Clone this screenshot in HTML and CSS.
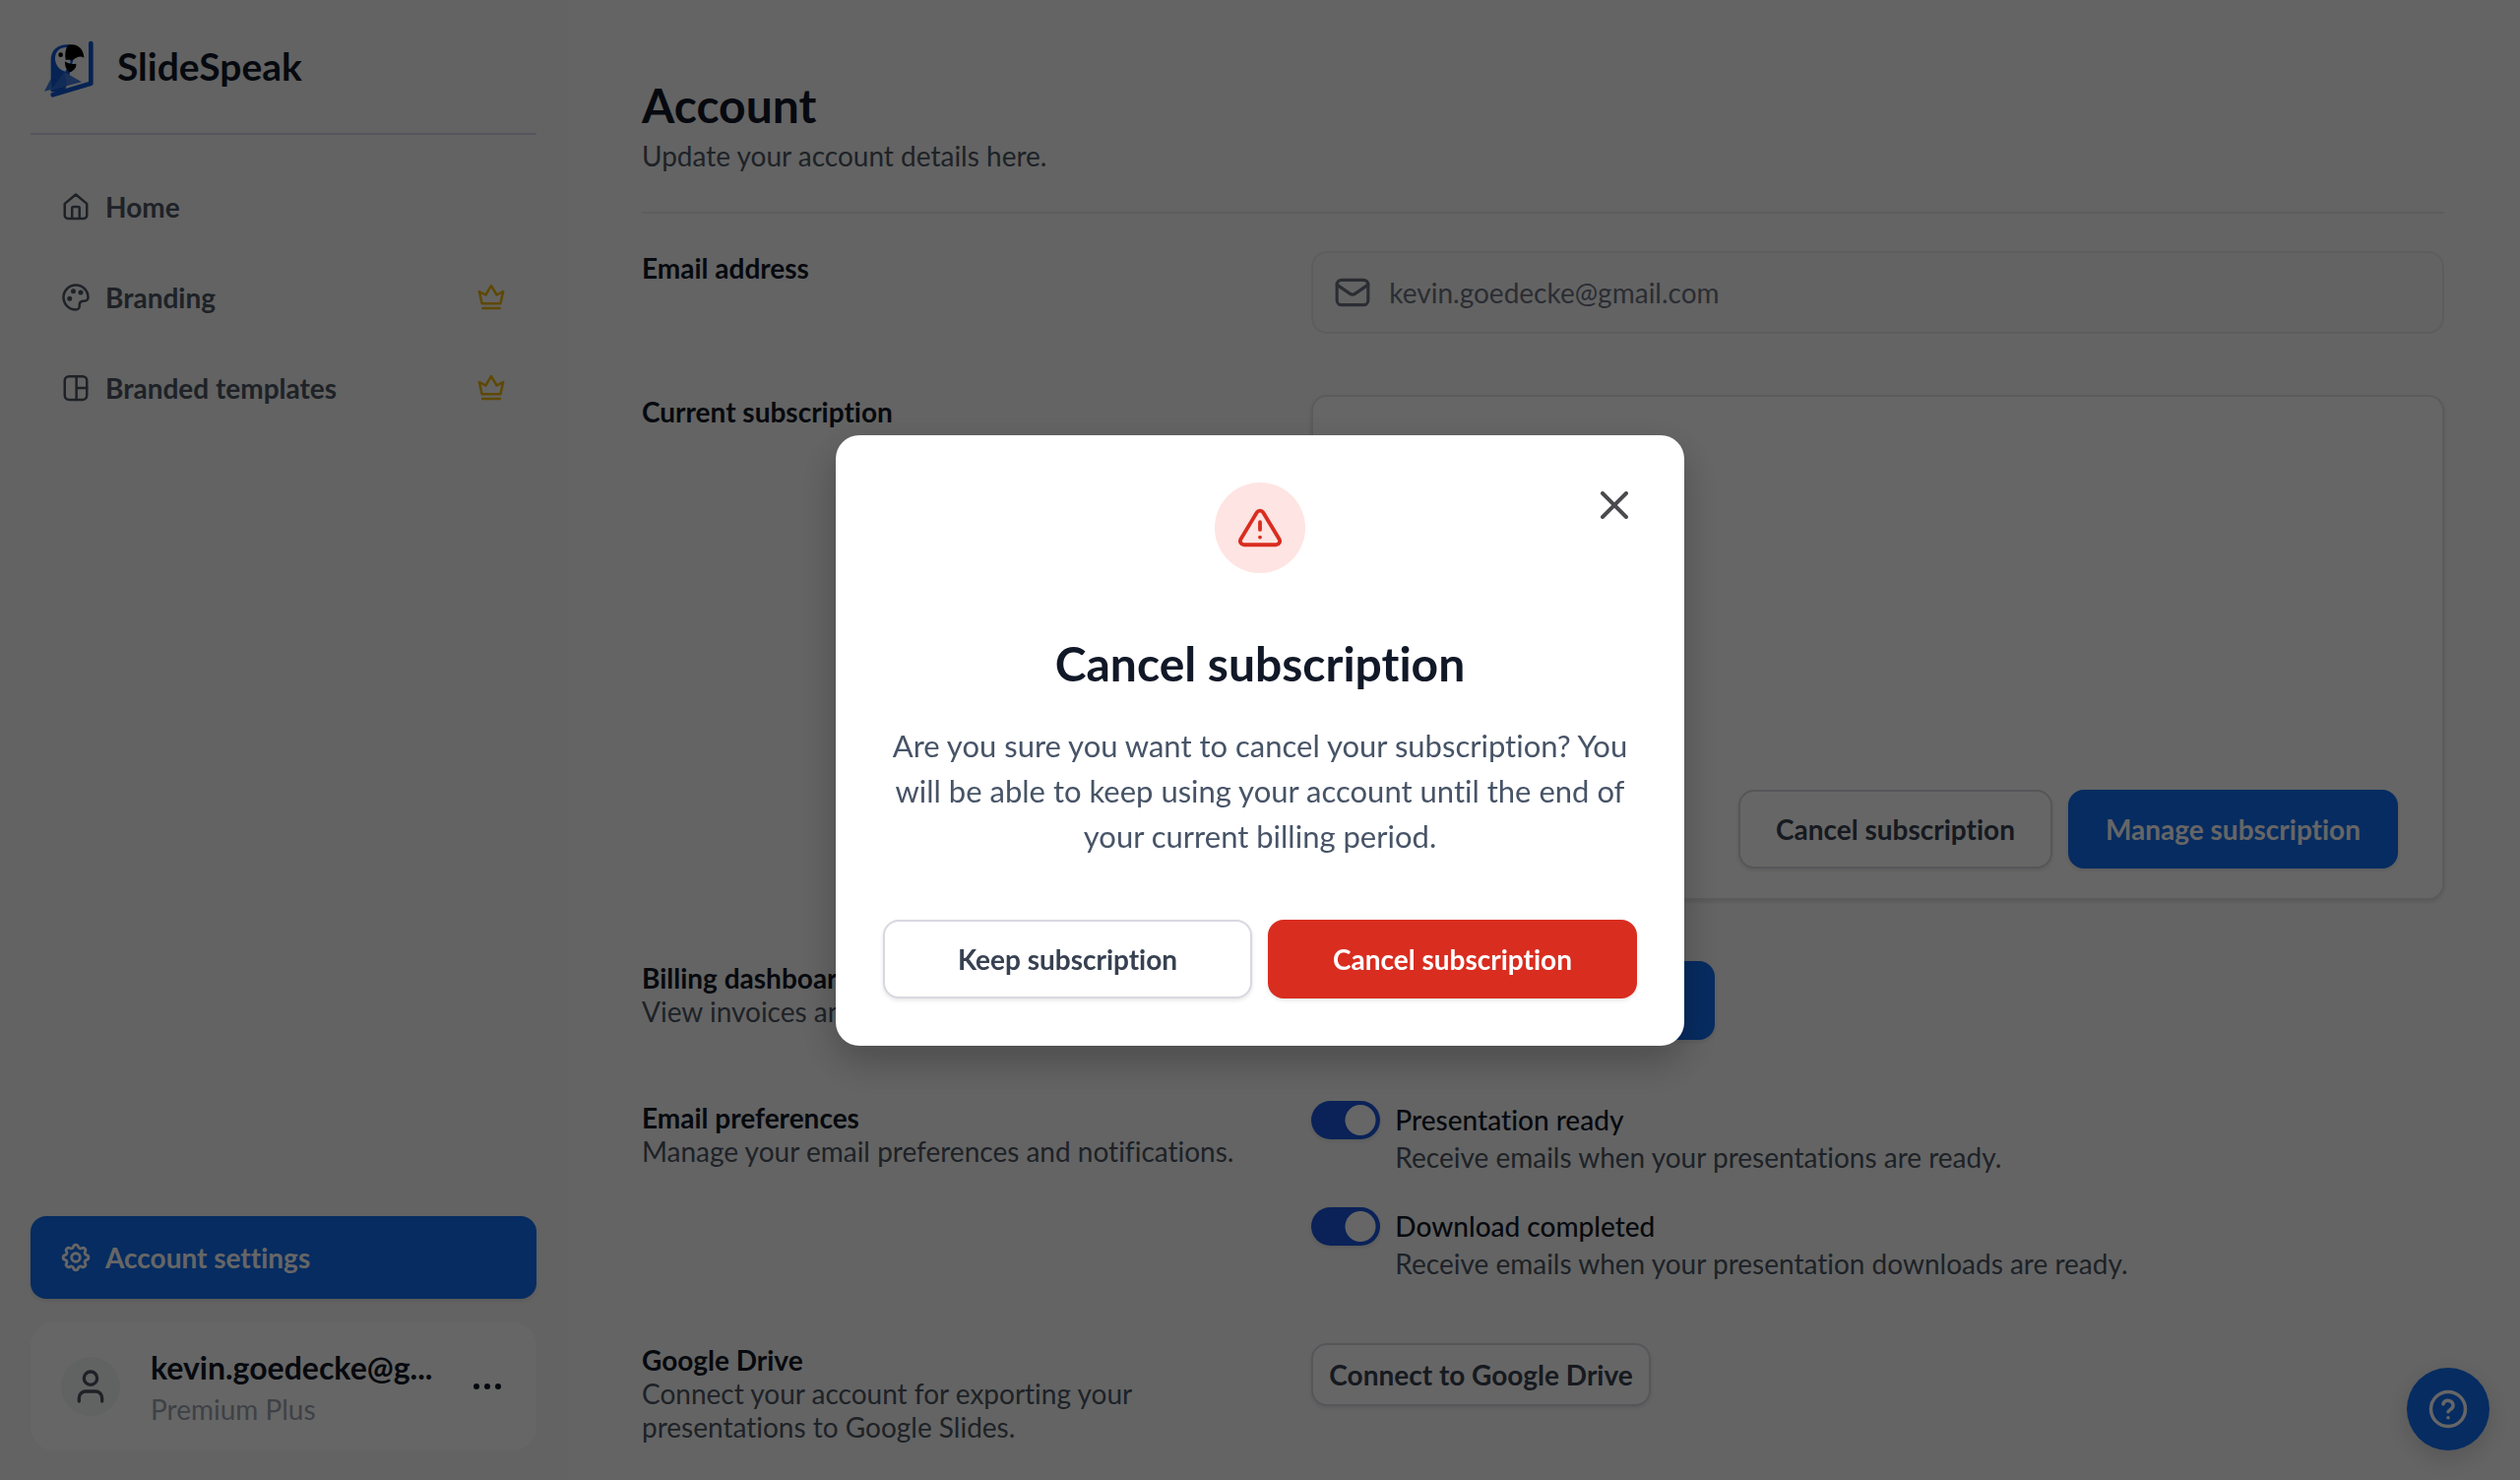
FILE: index.html
```html
<!DOCTYPE html>
<html lang="en">
<head>
<meta charset="utf-8">
<title>Account - SlideSpeak</title>
<link rel="stylesheet" href="styles.css">
</head>
<body>
<div class="app">
  <aside class="sidebar">
    <a class="brand" href="#">
      <svg class="brand-logo" viewBox="36 30 162 180" aria-hidden="true">
        <path fill="#0f57d2" d="M62 190V92C62 62 84 46 112 46L140 52 120 132 104 190Z"/>
        <path fill="#3b7de0" d="M42 188 62 150 66 182Z"/>
        <path fill="#4a7edb" d="M104 130 156 160 64 184Z"/>
        <path fill="#2f6fdc" d="M104 130 112 172 64 184Z"/>
        <path fill="#f5f5f5" d="M112 54C88 54 74 68 75 90C76 108 88 124 106 128L122 100Z"/>
        <circle cx="92" cy="77" r="7"/>
        <path d="M114 47C142 40 162 58 163 86C152 78 140 84 130 92L107 92C104 76 106 60 114 47Z"/>
        <path d="M105 97C116 106 128 106 139 104C140 116 134 124 120 130C110 124 104 112 105 97Z"/>
        <path fill="none" stroke="#0f57d2" stroke-width="14" stroke-linecap="round" stroke-linejoin="round" d="M184 42V164L68 199"/>
      </svg>
      <span class="brand-name">SlideSpeak</span>
    </a>
    <nav class="nav">
      <a class="nav-item" href="#">
        <svg class="nav-icon" viewBox="0 0 24 24"><path d="M3 9.500 12 2l9 7.500V19a2.500 2.500 0 0 1-2.500 2.500h-13A2.500 2.500 0 0 1 3 19ZM9 21.500V13a1 1 0 0 1 1-1h4a1 1 0 0 1 1 1v8.500"/></svg>
        <span>Home</span>
      </a>
      <a class="nav-item" href="#">
        <svg class="nav-icon" viewBox="0 0 24 24"><path d="M2 12c0 5.500 4.500 10 10 10 1.700 0 3-1.300 3-3v-.5c0-.5 0-.7.030-.9a3 3 0 0 1 2.570-2.570c.2-.030.4-.030.9-.030h.5c1.700 0 3-1.300 3-3C22 6.500 17.500 2 12 2S2 6.500 2 12Z"/><circle cx="7" cy="13" r="1"/><circle cx="16" cy="8" r="1"/><circle cx="10" cy="7" r="1"/></svg>
        <span>Branding</span>
        <svg class="crown" viewBox="0 0 24 24"><path d="M4.500 17 2.300 7.300 7.500 10 12 2.500 16.500 10l5.200-2.700L19.500 17ZM5 20.800h14"/></svg>
      </a>
      <a class="nav-item" href="#">
        <svg class="nav-icon" viewBox="0 0 24 24"><rect x="3" y="2.500" width="18" height="19" rx="3.500"/><path d="M12.500 2.500v19M12.500 12H21"/></svg>
        <span>Branded templates</span>
        <svg class="crown" viewBox="0 0 24 24"><path d="M4.500 17 2.300 7.300 7.500 10 12 2.500 16.500 10l5.200-2.700L19.500 17ZM5 20.800h14"/></svg>
      </a>
    </nav>
    <a class="nav-item nav-item-active" href="#" aria-current="page">
      <svg class="nav-icon" viewBox="1.500 1.500 21 21"><path d="M10.300 4.300c.4-1.750 2.950-1.750 3.400 0a1.720 1.720 0 0 0 2.570 1.070c1.540-.94 3.310.83 2.370 2.370a1.720 1.720 0 0 0 1.060 2.570c1.760.43 1.760 2.930 0 3.350a1.720 1.720 0 0 0-1.060 2.570c.94 1.550-.83 3.310-2.370 2.370a1.720 1.720 0 0 0-2.570 1.070c-.43 1.750-2.930 1.750-3.350 0a1.720 1.720 0 0 0-2.570-1.070c-1.550.94-3.310-.83-2.370-2.370a1.720 1.720 0 0 0-1.070-2.570c-1.750-.43-1.750-2.930 0-3.350a1.720 1.720 0 0 0 1.070-2.570c-.94-1.540.83-3.310 2.370-2.370 1 .61 2.290.07 2.520-1.070Z"/><circle cx="12" cy="12" r="3"/></svg>
      <span>Account settings</span>
    </a>
    <div class="user">
      <span class="avatar"><svg viewBox="0 0 24 24"><circle cx="12" cy="7" r="4"/><path d="M5 21v-2a4 4 0 0 1 4-4h6a4 4 0 0 1 4 4v2"/></svg></span>
      <div class="user-text">
        <div class="user-name">kevin.goedecke@g...</div>
        <div class="user-plan">Premium Plus</div>
      </div>
      <button class="more" type="button" aria-label="More options"><svg viewBox="0 0 32 8"><circle cx="5" cy="4" r="3"/><circle cx="16" cy="4" r="3"/><circle cx="27" cy="4" r="3"/></svg></button>
    </div>
  </aside>

  <main class="main">
    <header class="page-head">
      <h1>Account</h1>
      <p>Update your account details here.</p>
    </header>
    <div class="rows">
      <section class="row">
        <div class="row-label"><label for="email">Email address</label></div>
        <div class="field">
          <svg viewBox="0 0 24 24"><rect x="2" y="4" width="20" height="16" rx="3"/><path d="m2 7 8.200 5.700a3 3 0 0 0 3.600 0L22 7"/></svg>
          <input id="email" type="email" value="kevin.goedecke@gmail.com" readonly>
        </div>
      </section>
      <section class="row">
        <div class="row-label"><h2>Current subscription</h2></div>
        <div class="card">
          <button class="btn btn-plain" type="button">Cancel subscription</button>
          <button class="btn btn-blue" type="button">Manage subscription</button>
        </div>
      </section>
      <section class="row">
        <div class="row-label"><h2>Billing dashboard</h2><p>View invoices and billing details.</p></div>
        <div><button class="btn btn-blue btn-wide" type="button">Open billing dashboard</button></div>
      </section>
      <section class="row">
        <div class="row-label"><h2>Email preferences</h2><p>Manage your email preferences and notifications.</p></div>
        <div class="prefs">
          <div class="pref">
            <input class="toggle" id="ready" type="checkbox" role="switch" checked>
            <div><label for="ready">Presentation ready</label><p>Receive emails when your presentations are ready.</p></div>
          </div>
          <div class="pref">
            <input class="toggle" id="done" type="checkbox" role="switch" checked>
            <div><label for="done">Download completed</label><p>Receive emails when your presentation downloads are ready.</p></div>
          </div>
        </div>
      </section>
      <section class="row">
        <div class="row-label"><h2>Google Drive</h2><p>Connect your account for exporting your presentations to Google Slides.</p></div>
        <div><button class="btn btn-plain btn-small" type="button">Connect to Google Drive</button></div>
      </section>
    </div>
  </main>
</div>

<button class="help" type="button" aria-label="Help"><svg viewBox="0 0 24 24"><circle cx="12" cy="12" r="10"/><path d="M9.100 9a3 3 0 0 1 5.800 1c0 2-2.900 2.700-2.900 3.600M12 17h.01"/></svg></button>

<div class="overlay">
  <div class="modal" role="dialog" aria-modal="true" aria-labelledby="modal-title">
    <button class="close" type="button" aria-label="Close"><svg viewBox="0 0 28 28"><path d="m2 2 24 24M26 2 2 26"/></svg></button>
    <span class="alert"><svg viewBox="0 0 24 24"><path d="M12 9v4M12 17h.01M10.300 3.900 1.800 18a2 2 0 0 0 1.700 3h17a2 2 0 0 0 1.700-3L13.700 3.900a2 2 0 0 0-3.400 0Z"/></svg></span>
    <h2 id="modal-title" class="modal-title">Cancel subscription</h2>
    <p class="modal-text">Are you sure you want to cancel your subscription? You will be able to keep using your account until the end of your current billing period.</p>
    <div class="modal-actions">
      <button class="btn btn-plain" type="button">Keep subscription</button>
      <button class="btn btn-red" type="button">Cancel subscription</button>
    </div>
  </div>
</div>
</body>
</html>
```
FILE: styles.css
```css
* {
  box-sizing: border-box;
}

body,
h1,
h2,
p {
  margin: 0;
}

body {
  background: #fafafa;
  color: #111827;
  font-family: Lato, "Open Sans", sans-serif;
  font-size: 28px;
  font-variant-ligatures: none;
  line-height: 34px;
}

button,
input {
  font: inherit;
  font-variant-ligatures: none;
  color: inherit;
}

button {
  cursor: pointer;
}

svg {
  display: block;
  flex: none;
  fill: none;
  stroke: currentColor;
  stroke-width: 2;
  stroke-linecap: round;
  stroke-linejoin: round;
}

.app {
  display: flex;
  height: 100vh;
}

/* Sidebar */
.sidebar {
  display: flex;
  flex-direction: column;
  width: 576px;
  flex: none;
  padding: 0 31px 30px;
  background: #f8f8f8;
}

.brand {
  display: flex;
  align-items: center;
  gap: 22px;
  height: 137px;
  padding: 4px 12px 0;
  border-bottom: 2px solid #d4d4ee;
  color: #111827;
  font-size: 39px;
  font-weight: 700;
  text-decoration: none;
}

.brand-name {
  padding-bottom: 6px;
}

.brand-logo {
  width: 54px;
  height: 60px;
  fill: #000;
  stroke: none;
}

.nav {
  display: flex;
  flex: 1;
  flex-direction: column;
  gap: 8px;
  padding-top: 31px;
}

.nav-item {
  display: flex;
  align-items: center;
  gap: 15px;
  height: 84px;
  padding: 0 31px;
  border-radius: 16px;
  color: #4b5563;
  font-weight: 700;
  text-decoration: none;
}

.nav-item-active {
  background: #116ef2;
  color: #fff;
  box-shadow: 0 2px 4px rgba(0, 0, 0, 0.1);
}

.nav-icon {
  width: 30px;
  height: 30px;
}

.crown {
  width: 30px;
  height: 30px;
  margin-left: auto;
  color: #eab308;
}

.user {
  display: flex;
  align-items: center;
  gap: 31px;
  height: 130px;
  margin-top: 24px;
  padding: 0 34px 0 31px;
  border-radius: 24px;
  background: #fff;
}

.avatar {
  display: grid;
  place-items: center;
  width: 60px;
  height: 60px;
  flex: none;
  border-radius: 50%;
  background: #f3f4f6;
  color: #4b5563;
}

.avatar svg {
  width: 40px;
  height: 40px;
}

.user-text {
  flex: 1;
  min-width: 0;
  padding-top: 4px;
  line-height: 42px;
  white-space: nowrap;
}

.user-name {
  font-size: 32px;
  font-weight: 700;
}

.user-plan {
  color: #9ca3af;
}

.more {
  padding: 0;
  border: 0;
  background: none;
}

.more svg {
  width: 32px;
  height: 8px;
  fill: currentColor;
  stroke: none;
}

/* Account page */
.main {
  flex: 1;
  min-width: 0;
  padding: 81px 77px 40px 76px;
}

.page-head {
  padding-bottom: 40px;
  border-bottom: 2px solid #e8e8e8;
}

.page-head h1 {
  margin-bottom: 8px;
  font-size: 48px;
  font-weight: 700;
  line-height: 52px;
}

.page-head p,
.row-label p,
.pref p {
  color: #4b5563;
}

.rows {
  display: flex;
  flex-direction: column;
  gap: 62px;
  padding-top: 38px;
}

.row {
  display: grid;
  grid-template-columns: 13fr 23fr;
  gap: 30px;
  align-items: start;
}

.row-label label,
.row-label h2 {
  font-size: 28px;
  font-weight: 700;
}

.field {
  display: flex;
  align-items: center;
  gap: 18px;
  height: 84px;
  padding: 0 21px;
  border: 2px solid #e8e8e8;
  border-radius: 16px;
  background: #f8f8f8;
  color: #6b7280;
}

.field svg {
  width: 38px;
  height: 38px;
}

.field input {
  flex: 1;
  min-width: 0;
  padding: 0;
  border: 0;
  outline: 0;
  background: none;
}

.card {
  display: flex;
  align-items: flex-end;
  justify-content: flex-end;
  gap: 16px;
  min-height: 513px;
  padding: 30px 45px;
  border: 2px solid #e4e4e4;
  border-radius: 16px;
  background: #fff;
  box-shadow: 0 2px 4px rgba(0, 0, 0, 0.12);
}

.btn {
  height: 80px;
  padding: 0 36px;
  border: 2px solid transparent;
  border-radius: 16px;
  font-weight: 700;
  box-shadow: 0 2px 4px rgba(0, 0, 0, 0.1);
}

.btn-plain {
  border-color: #d8d8e0;
  background: #fff;
  color: #374151;
}

.btn-blue {
  border-color: #116ef2;
  background: #116ef2;
  color: #fff;
}

.btn-red {
  border-color: #d92d20;
  background: #d92d20;
  color: #fff;
}

.btn-wide {
  width: 410px;
}

.btn-small {
  height: 64px;
  padding: 0 16px;
}

.prefs {
  display: flex;
  flex-direction: column;
  gap: 32px;
}

.pref {
  display: flex;
  gap: 15px;
  line-height: 38px;
}

.pref label {
  font-weight: 500;
}

.toggle {
  width: 70px;
  height: 39px;
  margin: 0;
  flex: none;
  appearance: none;
  border-radius: 20px;
  background: radial-gradient(circle at 50px 50%, #fff 15px, #1a56db 16px);
  box-shadow: 0 2px 4px rgba(0, 0, 0, 0.1);
}

.help {
  position: fixed;
  right: 31px;
  bottom: 30px;
  display: grid;
  place-items: center;
  width: 84px;
  height: 84px;
  padding: 0;
  border: 0;
  border-radius: 50%;
  background: #116ef2;
  color: #fff;
  box-shadow: 0 8px 24px rgba(0, 0, 0, 0.15);
}

.help svg {
  width: 42px;
  height: 42px;
}

/* Confirmation dialog */
.overlay {
  position: fixed;
  inset: 0;
  display: grid;
  place-items: center;
  background: rgba(0, 0, 0, 0.6);
}

.modal {
  position: relative;
  display: flex;
  flex-direction: column;
  align-items: center;
  width: 862px;
  padding: 48px;
  border-radius: 24px;
  background: #fff;
  text-align: center;
  box-shadow: 0 16px 40px rgba(0, 0, 0, 0.25);
}

.close {
  position: absolute;
  top: 54px;
  right: 54px;
  padding: 3px;
  border: 0;
  background: none;
  color: #4b4b4f;
}

.close svg {
  width: 28px;
  height: 28px;
  stroke-width: 4;
}

.alert {
  display: grid;
  place-items: center;
  width: 92px;
  height: 92px;
  border-radius: 50%;
  background: #fee4e2;
  color: #d92d20;
}

.alert svg {
  width: 46px;
  height: 46px;
}

.modal-title {
  margin-top: 64px;
  font-size: 48px;
  font-weight: 700;
  line-height: 56px;
}

.modal-text {
  margin: 32px 0 62px;
  color: #475467;
  font-size: 31px;
  line-height: 46px;
}

.modal-actions {
  display: grid;
  grid-template-columns: 1fr 1fr;
  gap: 16px;
  width: 100%;
}
```
